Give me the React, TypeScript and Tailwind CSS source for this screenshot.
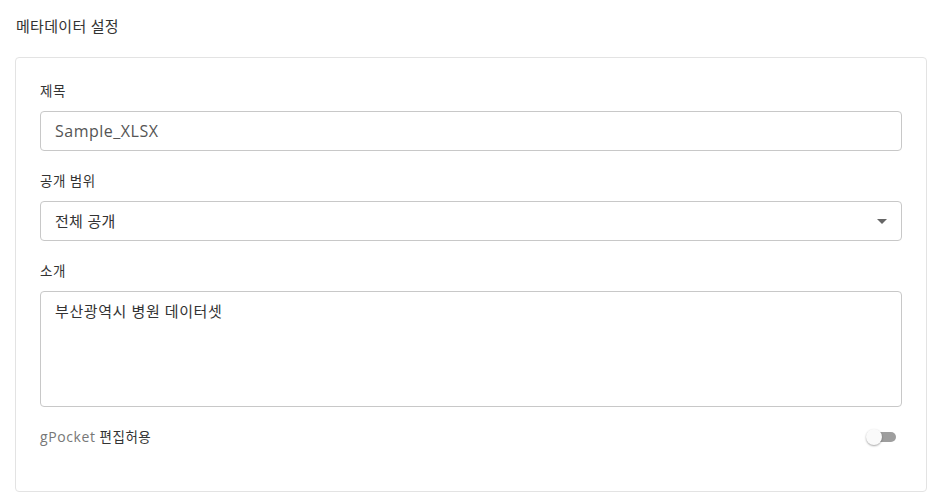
import React from "react";

const font = { fontFamily: '"Open Sans", "Noto Sans CJK KR", sans-serif' };

export default function App() {
  return (
    <div className="w-[940px] h-[502px] bg-white px-[15px] pt-[15px]" style={font}>
      <div className="text-[15px] leading-[22px] tracking-[0.3px] text-[#333] mb-[20px] pl-px">메타데이터 설정</div>
      <div className="w-[912px] h-[435px] border border-[#e3e3e3] rounded-[4px] px-[24px] pt-[23px]">
        <div className="text-[13.5px] leading-[20px] tracking-[0.5px] text-[#333] h-[30px]">제목</div>
        <div className="h-[40px] border border-[#c8c8c8] rounded-[4px] flex items-center px-[14px] text-[16px] tracking-[0.5px] text-[#555]">
          Sample_XLSX
        </div>
        <div className="text-[13.5px] leading-[20px] tracking-[0.5px] text-[#333] h-[20px] mt-[20px] mb-[10px]">공개 범위</div>
        <div className="h-[40px] border border-[#c8c8c8] rounded-[4px] flex items-center justify-between pl-[14px] pr-[14px] text-[15px] tracking-[0.3px] text-[#333]">
          <span>전체 공개</span>
          <svg width="10" height="5" viewBox="0 0 10 5"><path d="M0 0h10L5 5z" fill="#666" /></svg>
        </div>
        <div className="text-[13.5px] leading-[20px] tracking-[0.5px] text-[#333] h-[20px] mt-[20px] mb-[10px]">소개</div>
        <div className="h-[116px] border border-[#c8c8c8] rounded-[4px] px-[14px] pt-[8px] text-[15px] leading-[22px] tracking-[0.6px] text-[#333]">
          부산광역시 병원 데이터셋
        </div>
        <div className="flex items-center justify-between mt-[20px] h-[20px] pr-[6px]">
          <span className="text-[13.5px] tracking-[0.5px] text-[#777]">
            <span className="text-[14px] tracking-[0.6px]">gPocket</span> <span className="text-[#333]">편집허용</span>
          </span>
          <div className="relative w-[30px] h-[16px]">
            <div className="absolute left-[6px] top-[3px] w-[24px] h-[10px] rounded-full bg-[#9e9e9e]" />
            <div className="absolute left-0 top-0 w-[16px] h-[16px] rounded-full bg-[#fafafa] shadow-[0_1px_2px_rgba(0,0,0,0.35)]" />
          </div>
        </div>
      </div>
    </div>
  );
}
